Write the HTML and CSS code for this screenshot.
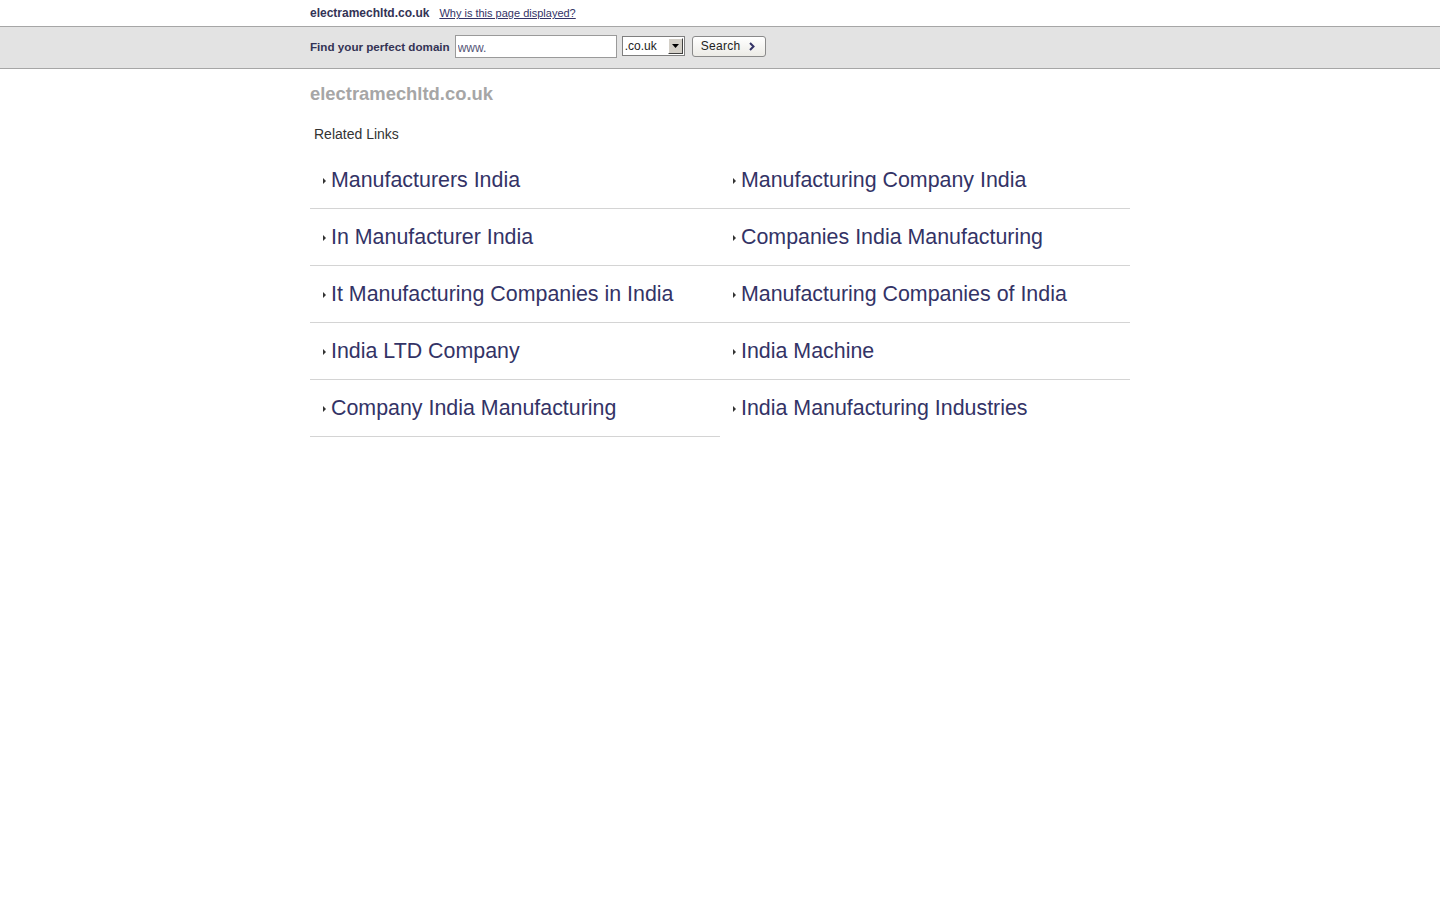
FILE: index.html
```html
<!DOCTYPE html>
<html lang="en">
<head>
<meta charset="utf-8">
<title>electramechltd.co.uk</title>
<link rel="stylesheet" href="styles.css">
</head>
<body>
<div class="topline">
  <div class="wrap topline-inner">
    <span class="domain">electramechltd.co.uk</span>
    <a class="why" href="#">Why is this page displayed?</a>
  </div>
</div>
<div class="searchbar">
  <div class="wrap searchbar-inner">
    <span class="find">Find your perfect domain</span>
    <input class="domain-input" type="text" value="www.">
    <div class="select">
      <span class="select-val">.co.uk</span>
      <span class="select-btn"><svg width="7" height="4" viewBox="0 0 7 4"><path d="M0 0H7L3.5 4Z" fill="#000"/></svg></span>
    </div>
    <button class="search-btn">Search <svg class="chev" width="6" height="9" viewBox="0 0 6 9"><path d="M1 1L4.5 4.5L1 8" fill="none" stroke="#333366" stroke-width="2"/></svg></button>
  </div>
</div>
<div class="wrap main">
  <h1 class="title">electramechltd.co.uk</h1>
  <div class="related">Related Links</div>
  <div class="links">
    <a class="link" href="#"><span class="arrow"></span>Manufacturers India</a>
    <a class="link" href="#"><span class="arrow"></span>Manufacturing Company India</a>
    <a class="link" href="#"><span class="arrow"></span>In Manufacturer India</a>
    <a class="link" href="#"><span class="arrow"></span>Companies India Manufacturing</a>
    <a class="link" href="#"><span class="arrow"></span>It Manufacturing Companies in India</a>
    <a class="link" href="#"><span class="arrow"></span>Manufacturing Companies of India</a>
    <a class="link" href="#"><span class="arrow"></span>India LTD Company</a>
    <a class="link" href="#"><span class="arrow"></span>India Machine</a>
    <a class="link" href="#"><span class="arrow"></span>Company India Manufacturing</a>
    <a class="link last" href="#"><span class="arrow"></span>India Manufacturing Industries</a>
  </div>
</div>
</body>
</html>
```
FILE: styles.css
```css
* { box-sizing: border-box; }
html, body { margin: 0; padding: 0; background: #fff; }
body { font-family: "Liberation Sans", Arial, sans-serif; color: #333; }
.wrap { width: 820px; margin: 0 auto; }

.topline { height: 26px; }
.topline-inner { display: flex; align-items: center; height: 26px; gap: 10px; }
.domain { font-size: 12px; font-weight: bold; color: #333355; }
.why { font-size: 11px; color: #333366; text-decoration: underline; }

.searchbar { background: #e3e3e3; border-top: 1px solid #a6a6a6; border-bottom: 1px solid #a6a6a6; height: 43px; }
.searchbar-inner { display: flex; align-items: center; height: 41px; padding-bottom: 2px; }
.find { font-size: 11.65px; font-weight: bold; color: #333355; margin-right: 5px; }
.domain-input { width: 162px; height: 23px; border: 1px solid #9a9a9a; background: #fff; font-family: "Liberation Sans", Arial, sans-serif; font-size: 12px; color: #555577; padding: 2px 2px 0; margin: 0; outline: none; }
.select { display: flex; align-items: stretch; width: 63px; height: 20px; margin-left: 5px; border: 1px solid #7f7f7f; background: #fff; margin-top: -2px; }
.select-val { flex: 1; font-size: 12px; color: #222; padding-left: 2px; line-height: 18px; }
.select-btn { width: 15px; margin: 1px; background: #d4d0c8; border: 1px solid; border-color: #fff #404040 #404040 #fff; display: flex; align-items: center; justify-content: center; }
.search-btn { margin-left: 7px; margin-top: -1px; width: 74px; height: 21px; border: 1px solid #8a8a8a; border-radius: 3px; background: linear-gradient(#ffffff, #ecebe6); font-family: "Liberation Sans", Arial, sans-serif; font-size: 12px; color: #222; padding: 0 0 0 8px; display: flex; align-items: center; gap: 8px; letter-spacing: 0.3px; }

.main { padding-top: 14px; }
.title { margin: 0; font-size: 18.4px; font-weight: bold; color: #a6a6a6; line-height: 22px; }
.related { font-size: 14px; color: #333; margin: 21px 0 0 4px; line-height: 16px; }
.links { display: grid; grid-template-columns: 410px 410px; margin-top: 10px; }
.link { display: flex; align-items: center; height: 57px; padding: 1px 0 0 13px; border-bottom: 1px solid #d4d4d4; font-size: 21.4px; color: #333366; text-decoration: none; }
.link.last { border-bottom-color: transparent; }
.arrow { width: 0; height: 0; border-top: 3px solid transparent; border-bottom: 3px solid transparent; border-left: 3px solid #333; margin-right: 5px; margin-top: 1px; }
```
